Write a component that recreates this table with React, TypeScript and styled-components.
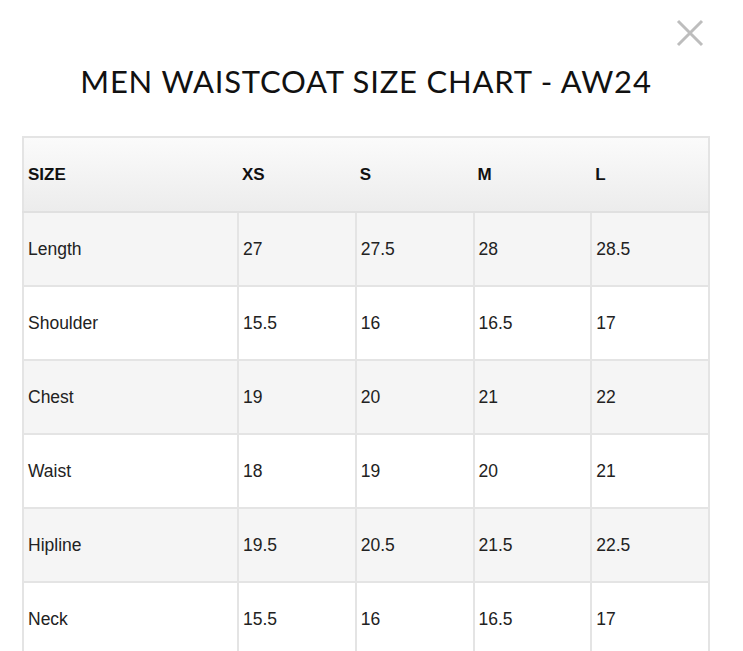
import React from "react";
import styled, { createGlobalStyle } from "styled-components";

const Global = createGlobalStyle`
  html, body { margin: 0; padding: 0; background: #fff; }
  body { font-family: "Liberation Sans", Arial, sans-serif; color: #222; }
`;

const Modal = styled.div`
  position: relative;
  width: 743px;
  height: 651px;
  overflow: hidden;
  padding: 0 0 0 22px;
  box-sizing: border-box;
`;

const Close = styled.button`
  position: absolute;
  top: 19px;
  left: 676px;
  width: 28px;
  height: 28px;
  padding: 0;
  border: none;
  background: transparent;
  cursor: pointer;
  display: flex;
`;

const Title = styled.h1`
  margin: 0;
  padding: 62px 0 0;
  height: 136px;
  box-sizing: border-box;
  width: 688px;
  text-align: center;
  font-family: "Lato", "Liberation Sans", sans-serif;
  font-weight: 400;
  font-size: 31px;
  line-height: 38px;
  color: #111;
  letter-spacing: 0.8px;
`;

const Table = styled.table`
  width: 688px;
  table-layout: fixed;
  border-collapse: collapse;
  border: 2px solid #e4e4e4;
`;

const HeadRow = styled.tr`
  background: linear-gradient(#fbfbfb, #ececec);
`;

const Th = styled.th`
  height: 73px;
  padding: 0 4px 0 4px;
  text-align: left;
  font-size: 17px;
  font-weight: 700;
  color: #111;
  border-bottom: 2px solid #e0e0e0;
`;

const Row = styled.tr<{ $shade: boolean }>`
  background: ${(p) => (p.$shade ? "#f5f5f5" : "#ffffff")};
`;

const Td = styled.td`
  height: 72px;
  padding: 0 4px 0 4px;
  font-size: 17.5px;
  color: #222;
  border: 2px solid #e4e4e4;
`;

const sizes = ["XS", "S", "M", "L"];
const rows: [string, string[]][] = [
  ["Length", ["27", "27.5", "28", "28.5"]],
  ["Shoulder", ["15.5", "16", "16.5", "17"]],
  ["Chest", ["19", "20", "21", "22"]],
  ["Waist", ["18", "19", "20", "21"]],
  ["Hipline", ["19.5", "20.5", "21.5", "22.5"]],
  ["Neck", ["15.5", "16", "16.5", "17"]],
];

export default function App() {
  return (
    <>
      <Global />
      <Modal>
        <Close aria-label="Close">
          <svg width="28" height="28" viewBox="0 0 28 28">
            <path d="M2 2 L26 26 M26 2 L2 26" stroke="#bdbdbd" strokeWidth="3" />
          </svg>
        </Close>
        <Title>MEN WAISTCOAT SIZE CHART - AW24</Title>
        <Table>
          <colgroup>
            <col style={{ width: 215 }} />
            <col />
            <col />
            <col />
            <col />
          </colgroup>
          <thead>
            <HeadRow>
              <Th>SIZE</Th>
              {sizes.map((s) => (
                <Th key={s}>{s}</Th>
              ))}
            </HeadRow>
          </thead>
          <tbody>
            {rows.map(([name, vals], i) => (
              <Row key={name} $shade={i % 2 === 0}>
                <Td>{name}</Td>
                {vals.map((v, j) => (
                  <Td key={j}>{v}</Td>
                ))}
              </Row>
            ))}
          </tbody>
        </Table>
      </Modal>
    </>
  );
}
